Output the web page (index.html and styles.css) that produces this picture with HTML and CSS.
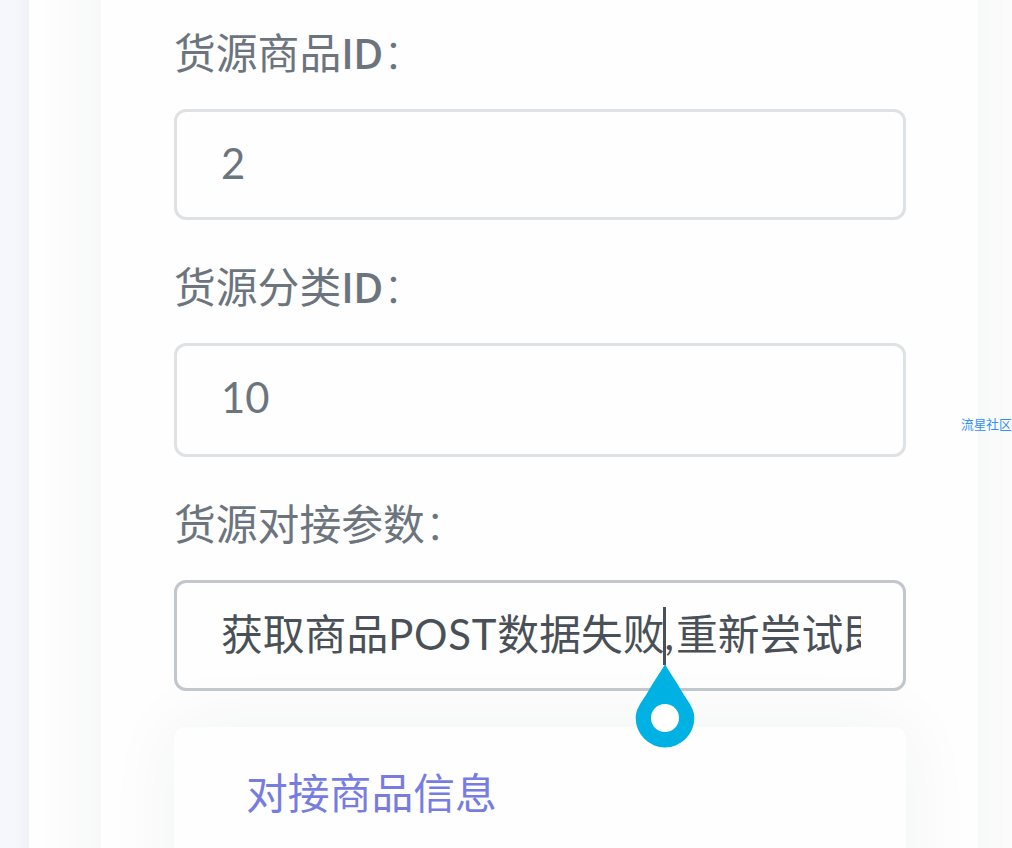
FILE: index.html
```html
<!DOCTYPE html>
<html lang="zh-CN">
<head>
<meta charset="UTF-8">
<meta name="viewport" content="width=device-width, initial-scale=1.0">
<title>货源对接</title>
<link rel="stylesheet" href="styles.css">
</head>
<body>

<div class="page">
    <div class="card">
        <form class="card-body">
            <div class="form-group">
                <label for="goodsId">货源商品<span class="latin-bold">ID</span><span class="colon">：</span></label>
                <input type="text" class="form-control" id="goodsId" value="2">
            </div>
            <div class="form-group">
                <label for="classId">货源分类<span class="latin-bold">ID</span><span class="colon">：</span></label>
                <input type="text" class="form-control tall" id="classId" value="10">
            </div>
            <div class="form-group">
                <label id="paramLabel">货源对接参数<span class="colon">：</span></label>
                <div class="form-control focused" role="textbox" aria-labelledby="paramLabel">
                    <div class="value">获取商品<span class="latin">POST</span>数据失败<span class="comma">,</span>重新尝试即</div>
                    <!-- text cursor and its drag handle -->
                    <div class="caret"></div>
                    <svg class="handle" width="60" height="84" viewBox="0 0 60 84">
                        <path d="M30 0C33 6 41 17 49 31C55 40 59.300 46 59.300 54A29.300 29.500 0 0 1 .7 54C.7 46 5 40 11 31C19 17 27 6 30 0Z" fill="#00b1e3"/>
                        <circle cx="30" cy="54" r="14" fill="#fff"/>
                    </svg>
                </div>
            </div>
            <div class="info-card">
                <a class="info-title">对接商品信息</a>
            </div>
        </form>
    </div>
</div>
<div class="watermark">流星社区</div>

</body>
</html>
```

FILE: styles.css
```css
* {
    box-sizing: border-box;
}
body {
    margin: 0;
    height: 848px;
    overflow: hidden;
    background: linear-gradient(to right, #f6f8fd 0, #f4f6fb 18px, #eef1f6 29px);
    font-family: Lato, "Noto Sans CJK SC", sans-serif;
    font-size: 41.8px;
    color: #6c757d;
}
.page {
    display: flex;
    height: 848px;
    margin-left: 29px;
    padding: 0 34px 0 72px;
    background-color: #fefefe;
    overflow: hidden;
}
/* runs past the top and bottom of the page so only its side shadows show */
.card {
    flex: 1;
    min-width: 0;
    height: 1100px;
    margin-top: -100px;
    background-color: #fefefe;
    box-shadow: 0 0 72px rgba(40, 45, 50, 0.06);
}
.card-body {
    padding: 122px 72px 0 73px;
}
.form-group {
    margin-bottom: 36px;
}
label {
    display: block;
    height: 63px;
    margin-bottom: 24px;
    line-height: 62px;
    white-space: nowrap;
}
.latin-bold {
    font-family: "Open Sans", sans-serif;
    font-size: 41px;
    font-weight: 600;
    letter-spacing: -0.4px;
}
.colon {
    font-weight: 300;
}
.form-control {
    display: block;
    position: relative;
    width: 100%;
    height: 111px;
    padding: 0 42px 4px 44px;
    border: 3px solid #dfe2e4;
    border-radius: 12px;
    background-color: transparent;
    color: #6c757d;
    font-family: inherit;
    font-size: inherit;
    outline: none;
}
.tall {
    height: 114px;
    padding-bottom: 7px;
}
.focused {
    border-color: #c1c7cc;
    color: #495057;
}
.value {
    height: 103px;
    line-height: 102px;
    white-space: nowrap;
    overflow: hidden;
}
.latin {
    letter-spacing: 0.8px;
}
.comma {
    letter-spacing: 2px;
}
.caret {
    position: absolute;
    left: 486px;
    top: 24px;
    width: 3px;
    height: 58px;
    background-color: #495057;
}
.handle {
    position: absolute;
    left: 458px;
    top: 81px;
    z-index: 2;
}
.info-card {
    height: 300px;
    padding: 35px 72px;
    border-radius: 12px;
    background-color: #fefefe;
    box-shadow: 0 0 72px rgba(40, 45, 50, 0.06);
}
.info-title {
    color: #777de0;
    line-height: 63px;
}
.watermark {
    position: absolute;
    left: 961px;
    top: 415px;
    color: #3291f8;
    font-size: 12.7px;
    line-height: 18px;
    white-space: nowrap;
}
```
